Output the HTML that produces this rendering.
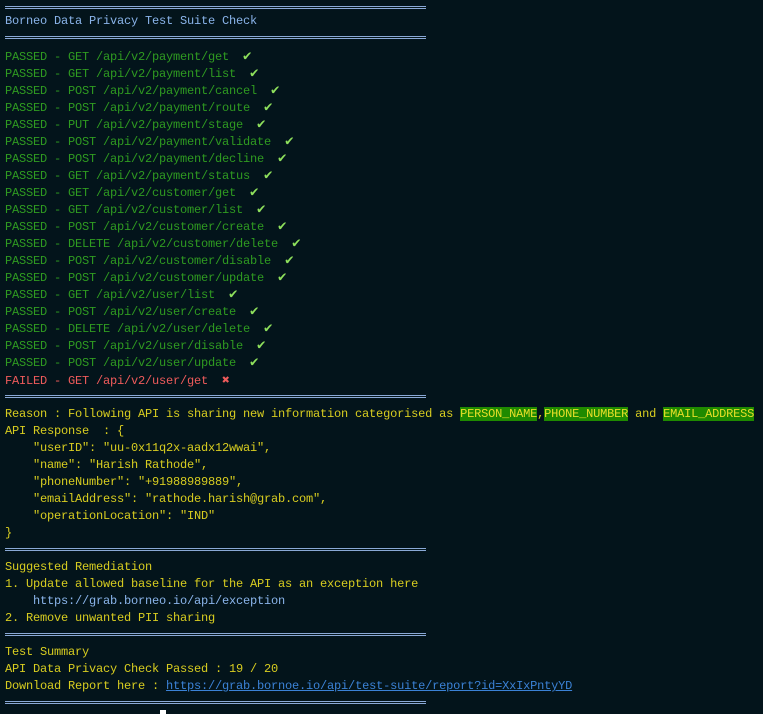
<!DOCTYPE html>
<html><head><meta charset="utf-8"><style>
html,body{margin:0;padding:0;background:#03141b;width:763px;height:714px;overflow:hidden}
body{font-family:"Liberation Mono","DejaVu Sans Mono",monospace;font-size:12px;letter-spacing:-0.2px}
.r{height:17px;line-height:17px;white-space:pre;padding-left:5px;position:relative}
.s{height:17px;position:relative}
.s:after{content:"";position:absolute;left:5px;width:421px;top:6px;height:1px;border-top:1px solid #8aa9d6;border-bottom:1px solid #8aa9d6;}
.t{color:#8ab4ea}
.p{color:#2f9b21}
.k{color:#8ee05c;font-size:14px;font-weight:bold;letter-spacing:0}
.f{color:#ef5b5b}
.x{color:#ef5b5b;font-size:13px;font-weight:bold}
.y{color:#d8cd20}
.h{background:#1f8a00;color:#e8df28}
a{color:#3b82d6;text-decoration:underline}
.cur{position:absolute;left:160px;top:710px;width:6px;height:4px;background:#fff}
</style></head><body>
<div class="s" style="height:13px"></div>
<div class="r t">Borneo Data Privacy Test Suite Check</div>
<div class="s" style="height:19px"></div>
<div class="r p">PASSED - GET /api/v2/payment/get  <span class="k">✔</span></div>
<div class="r p">PASSED - GET /api/v2/payment/list  <span class="k">✔</span></div>
<div class="r p">PASSED - POST /api/v2/payment/cancel  <span class="k">✔</span></div>
<div class="r p">PASSED - POST /api/v2/payment/route  <span class="k">✔</span></div>
<div class="r p">PASSED - PUT /api/v2/payment/stage  <span class="k">✔</span></div>
<div class="r p">PASSED - POST /api/v2/payment/validate  <span class="k">✔</span></div>
<div class="r p">PASSED - POST /api/v2/payment/decline  <span class="k">✔</span></div>
<div class="r p">PASSED - GET /api/v2/payment/status  <span class="k">✔</span></div>
<div class="r p">PASSED - GET /api/v2/customer/get  <span class="k">✔</span></div>
<div class="r p">PASSED - GET /api/v2/customer/list  <span class="k">✔</span></div>
<div class="r p">PASSED - POST /api/v2/customer/create  <span class="k">✔</span></div>
<div class="r p">PASSED - DELETE /api/v2/customer/delete  <span class="k">✔</span></div>
<div class="r p">PASSED - POST /api/v2/customer/disable  <span class="k">✔</span></div>
<div class="r p">PASSED - POST /api/v2/customer/update  <span class="k">✔</span></div>
<div class="r p">PASSED - GET /api/v2/user/list  <span class="k">✔</span></div>
<div class="r p">PASSED - POST /api/v2/user/create  <span class="k">✔</span></div>
<div class="r p">PASSED - DELETE /api/v2/user/delete  <span class="k">✔</span></div>
<div class="r p">PASSED - POST /api/v2/user/disable  <span class="k">✔</span></div>
<div class="r p">PASSED - POST /api/v2/user/update  <span class="k">✔</span></div>
<div class="r f">FAILED - GET /api/v2/user/get  <span class="x">✖</span></div>
<div class="s"></div>
<div class="r y">Reason : Following API is sharing new information categorised as <span class="h">PERSON_NAME</span>,<span class="h">PHONE_NUMBER</span> and <span class="h">EMAIL_ADDRESS</span></div>
<div class="r y">API Response  : {</div>
<div class="r y">    "userID": "uu-0x11q2x-aadx12wwai",</div>
<div class="r y">    "name": "Harish Rathode",</div>
<div class="r y">    "phoneNumber": "+91988989889",</div>
<div class="r y">    "emailAddress": "rathode.harish@grab.com",</div>
<div class="r y">    "operationLocation": "IND"</div>
<div class="r y">}</div>
<div class="s"></div>
<div class="r y">Suggested Remediation</div>
<div class="r y">1. Update allowed baseline for the API as an exception here</div>
<div class="r t">    https://grab.borneo.io/api/exception</div>
<div class="r y">2. Remove unwanted PII sharing</div>
<div class="s"></div>
<div class="r y">Test Summary</div>
<div class="r y">API Data Privacy Check Passed : 19 / 20</div>
<div class="r y">Download Report here : <a>https://grab.bornoe.io/api/test-suite/report?id=XxIxPntyYD</a></div>
<div class="s"></div>
<div class="cur"></div>
</body></html>
